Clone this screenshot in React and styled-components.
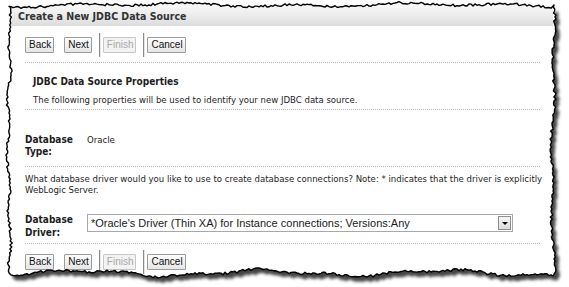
import styled, { createGlobalStyle } from "styled-components";

const GlobalStyle = createGlobalStyle`
  html, body {
    margin: 0;
    padding: 0;
    background: #fff;
  }
`;

const tahoma = `"DejaVu Sans Condensed", "DejaVu Sans", sans-serif`;
const arial = `"Liberation Sans", Arial, sans-serif`;

// torn paper outline, generated once
const buildEdge = () => {
  let s = 48271;
  const rnd = () => {
    s = (s * 16807) % 2147483647;
    return s / 2147483647 - 0.5;
  };
  const L = 9, T = 5, R = 553, B = 273;
  const pts = [];
  for (let x = L; x < R; x += 2)
    pts.push([x, T + 1.3 * Math.sin(x / 17) + 1.1 * Math.sin(x / 43 + 1) + rnd() * 2.4]);
  for (let y = T; y < B; y += 2)
    pts.push([R + 1.4 * Math.sin(y / 13) + 1 * Math.sin(y / 37) + rnd() * 2.4, y]);
  for (let x = R; x > L; x -= 2)
    pts.push([x, B + 2.6 * Math.sin(x / 29 + 2) + 1.3 * Math.sin(x / 11) + rnd() * 2.6]);
  for (let y = B; y > T; y -= 2)
    pts.push([L + 1.3 * Math.sin(y / 9) + 0.9 * Math.sin(y / 31) + rnd() * 2.6, y]);
  return "M" + pts.map(([x, y]) => `${x.toFixed(1)} ${y.toFixed(1)}`).join("L") + "Z";
};
const edge = buildEdge();
const outside = `M0 0H569V287H0Z ${edge}`;

const Page = styled.div`
  position: relative;
  width: 569px;
  height: 287px;
  overflow: hidden;
  background: #fff;
`;

const Paper = styled.div`
  width: 545px;
  margin-left: 8px;
  padding-top: 2px;
  font-family: ${tahoma};
  color: #1e1e1e;
`;

const Header = styled.div`
  height: 20px;
  padding: 4px 0 0 10px;
  display: flex;
  align-items: center;
  background: linear-gradient(#fbfbfb, #ececec 55%, #dcdcdc);
  font-size: 10.5px;
  font-weight: bold;
  color: #333;
`;

const Body = styled.div`
  padding: 0 13px 0 17px;
`;

const ButtonBar = styled.div`
  display: flex;
  align-items: center;
  height: 24px;
  margin-top: ${(p) => p.$top}px;
`;

const Button = styled.button`
  height: 16px;
  padding: 0 2px 0 3px;
  border: 1px solid ${(p) => (p.disabled ? "#c6c6c6" : "#9c9c9c")};
  border-radius: 1px;
  background: ${(p) =>
    p.disabled ? "#f3f3f3" : "linear-gradient(#fdfdfd, #e6e6e6)"};
  color: ${(p) => (p.disabled ? "#a8a8a8" : "#111")};
  font-family: ${arial};
  font-size: 10px;
  line-height: 14px;
  & + & {
    margin-left: 10px;
  }
`;

const Separator = styled.span`
  width: 1px;
  height: 24px;
  margin: 0 3px 0 7px;
  background: #8c8c8c;
  box-shadow: 1px 0 0 #e4e4e4;
`;

const Divider = styled.div`
  border-top: 1px dotted #b8b8b8;
  margin-top: ${(p) => p.$top}px;
`;

const Heading = styled.div`
  margin-top: 12px;
  padding-left: 8px;
  font-size: 10px;
  font-weight: bold;
  line-height: 14px;
`;

const Text = styled.div`
  margin-top: ${(p) => p.$top}px;
  padding-left: ${(p) => p.$indent || 0}px;
  font-size: 9.5px;
  line-height: ${(p) => p.$lh || 12}px;
  white-space: nowrap;
`;

const Line = styled.span`
  display: block;
`;

const Field = styled.div`
  display: grid;
  grid-template-columns: 62px 1fr;
  align-items: start;
  margin-top: ${(p) => p.$top}px;
`;

const Label = styled.div`
  width: 55px;
  font-size: 10px;
  font-weight: bold;
  line-height: ${(p) => p.$lh}px;
`;

const Value = styled.div`
  font-size: 9.5px;
  line-height: 12px;
`;

const Select = styled.div`
  width: 426px;
  height: 18px;
  margin-top: 1px;
  box-sizing: border-box;
  border: 1px solid #a4a9ae;
  display: flex;
  align-items: center;
  justify-content: space-between;
  padding: 0 1px 0 3px;
  font-family: ${arial};
  font-size: 11px;
  color: #1a1a1a;
  background: #fff;
`;

const Arrow = styled.span`
  width: 13px;
  height: 14px;
  box-sizing: border-box;
  border: 1px solid #8e8e8e;
  background: linear-gradient(#f6f6f6, #dcdcdc);
  display: flex;
  align-items: center;
  justify-content: center;
  &::after {
    content: "";
    border-left: 3px solid transparent;
    border-right: 3px solid transparent;
    border-top: 3px solid #000;
  }
`;

const Torn = styled.svg`
  position: absolute;
  left: 0;
  top: 0;
  pointer-events: none;
`;

const Buttons = ({ top }) => (
  <ButtonBar $top={top}>
    <Button>Back</Button>
    <Button>Next</Button>
    <Separator />
    <Button disabled>Finish</Button>
    <Separator />
    <Button>Cancel</Button>
  </ButtonBar>
);

export default function App() {
  return (
    <Page>
      <GlobalStyle />
      <Paper>
        <Header>Create a New JDBC Data Source</Header>
        <Body>
          <Buttons top={7} />
          <Divider $top={5} />
          <Heading>JDBC Data Source Properties</Heading>
          <Text $top={5} $indent={8}>
            The following properties will be used to identify your new JDBC data source.
          </Text>
          <Divider $top={3} />
          <Field $top={24}>
            <Label $lh={12}>Database Type:</Label>
            <Value>Oracle</Value>
          </Field>
          <Divider $top={8} />
          <Text $top={6} $lh={11}>
            <Line>
              What database driver would you like to use to create database connections? Note: * indicates that the driver is explicitly
            </Line>
            <Line>WebLogic Server.</Line>
          </Text>
          <Field $top={18}>
            <Label $lh={13}>Database Driver:</Label>
            <Select>
              *Oracle's Driver (Thin XA) for Instance connections; Versions:Any
              <Arrow />
            </Select>
          </Field>
          <Divider $top={4} />
          <Buttons top={6} />
        </Body>
      </Paper>
      <Torn width="569" height="287" viewBox="0 0 569 287">
        <defs>
          <filter id="soft" x="-5%" y="-5%" width="110%" height="110%">
            <feGaussianBlur stdDeviation="1.8" />
          </filter>
          <clipPath id="outer">
            <path clipRule="evenodd" d={outside} />
          </clipPath>
        </defs>
        <path d={outside} fill="#fff" fillRule="evenodd" />
        <g clipPath="url(#outer)">
          <path d={edge} transform="translate(4 5)" fill="#444" filter="url(#soft)" />
        </g>
        <path d={edge} fill="none" stroke="#000" strokeWidth="1.4" strokeLinejoin="round" />
      </Torn>
    </Page>
  );
}
